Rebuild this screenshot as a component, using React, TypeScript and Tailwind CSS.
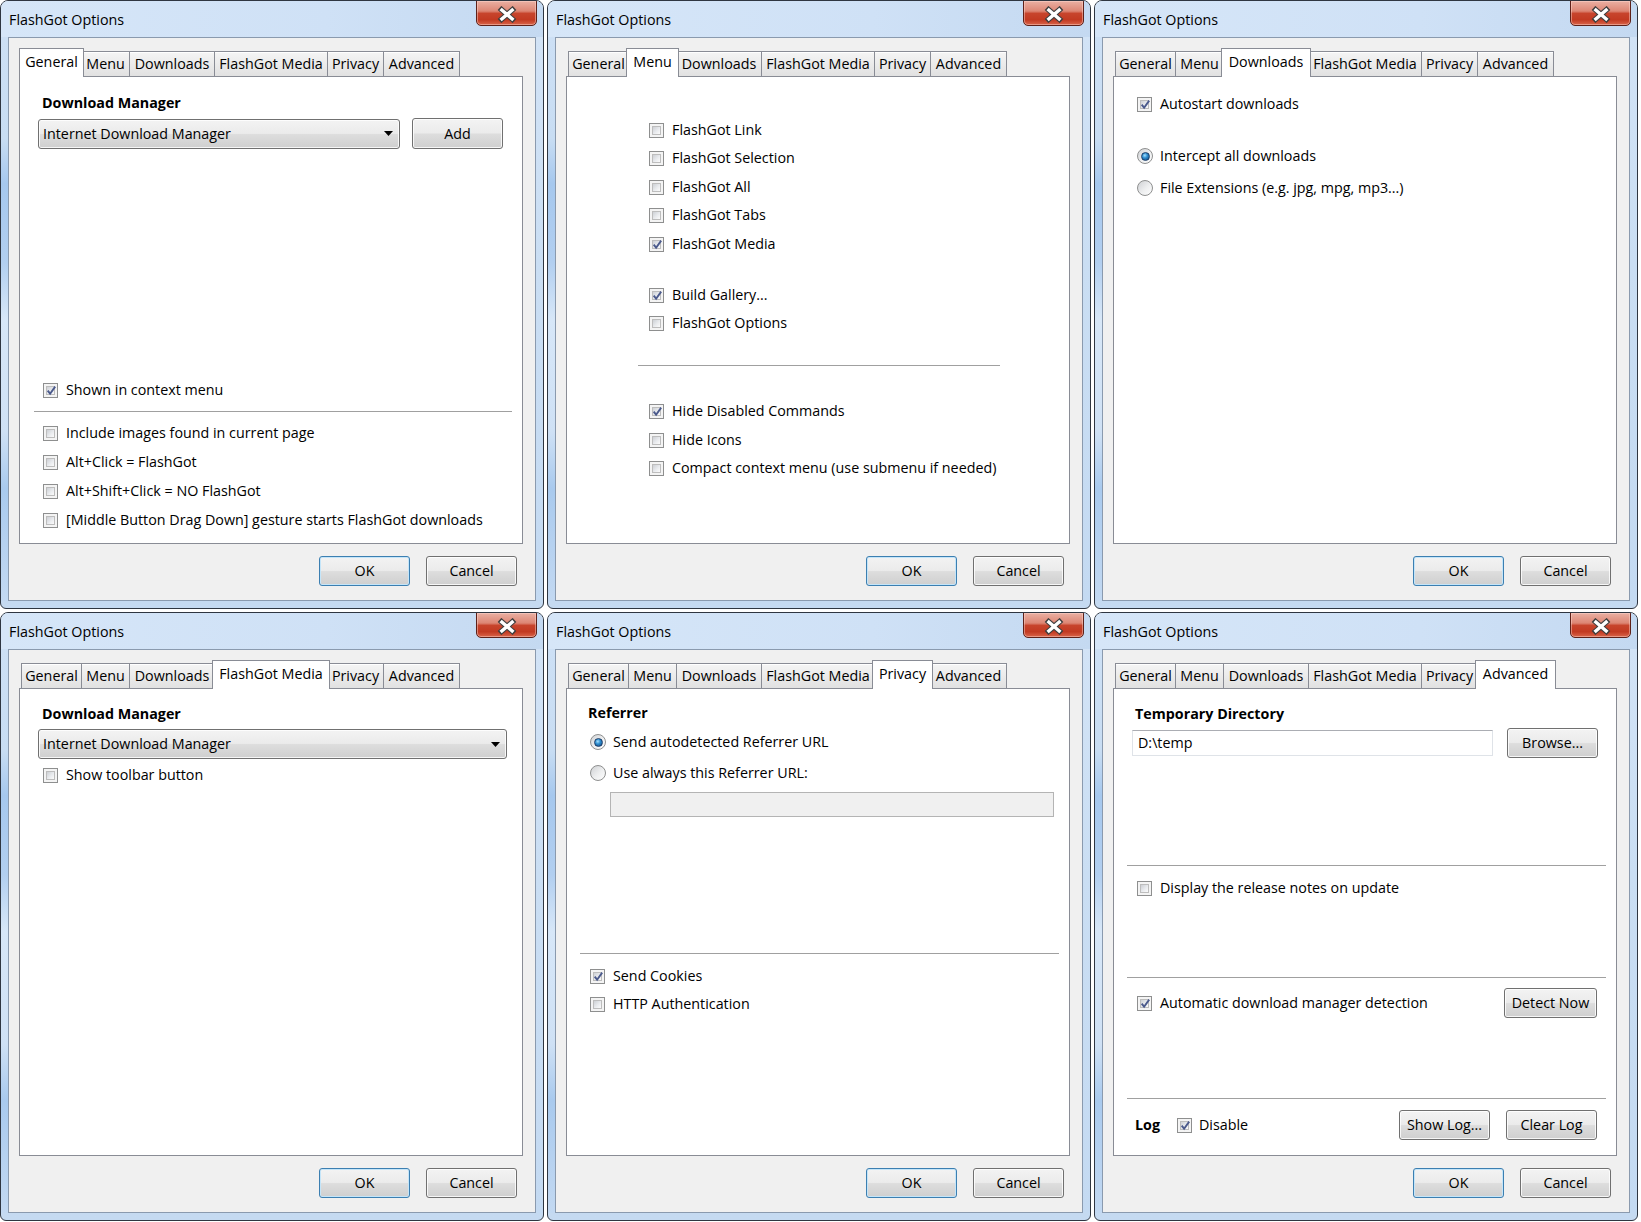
import React from "react";

const TABS: [string, string, string][] = [
  ["General", "w-[61px]", "w-[65px]"],
  ["Menu", "w-[49px]", "w-[53px]"],
  ["Downloads", "w-[86px]", "w-[90px]"],
  ["FlashGot Media", "w-[114px]", "w-[118px]"],
  ["Privacy", "w-[57px]", "w-[61px]"],
  ["Advanced", "w-[77px]", "w-[81px]"],
];

const btnBg =
  "bg-[linear-gradient(to_bottom,#f3f3f3_0%,#ebebeb_48%,#dddddd_52%,#cfcfcf_100%)]";

function Box({ on }: { on?: boolean }) {
  return (
    <div className="relative w-[15px] h-[15px] shrink-0 border border-[#8e8f8f] bg-[#f4f4f4] p-[2px]">
      <div className="w-full h-full border border-[#bdbdbd] bg-[linear-gradient(135deg,#cdd0d5_0%,#e9ebee_55%,#fbfbfb_100%)]" />
      {on && (
        <svg className="absolute left-[1px] top-[0px]" width="13" height="13" viewBox="0 0 13 13">
          <path d="M2.7 6.7 L5.1 9.7 L10.2 2.6" fill="none" stroke="#4b5a8c" strokeWidth="1.9" />
        </svg>
      )}
    </div>
  );
}

function Check({ on, label, className = "" }: { on?: boolean; label: string; className?: string }) {
  return (
    <div className={`flex items-center h-[20px] ${className}`}>
      <Box on={on} />
      <span className="ml-[8px] whitespace-nowrap">{label}</span>
    </div>
  );
}

function Radio({ on, label, className = "" }: { on?: boolean; label: string; className?: string }) {
  return (
    <div className={`flex items-center h-[20px] ${className}`}>
      <div className="w-[16px] h-[16px] shrink-0 rounded-full border border-[#8e8f8f] bg-[linear-gradient(135deg,#cfd1d4_0%,#eeeff0_55%,#fdfdfd_100%)] flex items-center justify-center">
        {on && (
          <div className="w-[9px] h-[9px] rounded-full border border-[#1d3f6b] bg-[radial-gradient(circle_at_40%_35%,#a6e0ff_0%,#2f8fd0_40%,#0f3f78_100%)]" />
        )}
      </div>
      <span className="ml-[7px] whitespace-nowrap">{label}</span>
    </div>
  );
}

function Btn({ label, className = "", def }: { label: string; className?: string; def?: boolean }) {
  return (
    <div
      className={`flex items-center justify-center shrink-0 rounded-[3px] border ${
        def
          ? "border-[#3c7fb1] shadow-[inset_0_0_0_1px_#c4e5f9]"
          : "border-[#707070] shadow-[inset_0_0_0_1px_rgba(255,255,255,0.8)]"
      } ${btnBg} ${className}`}
    >
      {label}
    </div>
  );
}

function Combo({ className = "" }: { className?: string }) {
  return (
    <div
      className={`flex items-center shrink-0 rounded-[3px] border border-[#707070] shadow-[inset_0_0_0_1px_rgba(255,255,255,0.8)] ${btnBg} pl-[4px] pr-[6px] ${className}`}
    >
      <span className="flex-1 whitespace-nowrap">Internet Download Manager</span>
      <svg width="9" height="5" viewBox="0 0 9 5">
        <path d="M0 0H9L4.5 5Z" fill="#000" />
      </svg>
    </div>
  );
}

function Sep({ className = "" }: { className?: string }) {
  return <div className={`h-[1px] shrink-0 bg-[#a0a0a0] ${className}`} />;
}

function Tabs({ active }: { active: number }) {
  return (
    <div className="flex items-end h-[28px] pl-[2px] shrink-0">
      {TABS.map(([name, w, wSel], i) => {
        const sel = i === active;
        const margin = sel ? (i === 0 ? "-ml-[2px] -mr-[2px]" : "-ml-[3px] -mr-[2px]") : i === 0 ? "" : "-ml-[1px]";
        return (
          <div
            key={name}
            className={`${margin} ${
              sel
                ? `${wSel} h-[29px] -mb-[1px] bg-white relative z-10 pb-[3px]`
                : `${w} h-[25px] bg-[linear-gradient(to_bottom,#f5f5f5_0%,#ebebeb_50%,#e1e1e1_100%)] shadow-[inset_0_1px_0_#fff]`
            } flex items-center justify-center border border-b-0 border-[#898c95] whitespace-nowrap`}
          >
            {name}
          </div>
        );
      })}
    </div>
  );
}

function Close() {
  return (
    <div className="absolute top-[-1px] right-[6px] w-[61px] h-[26px] rounded-b-[5px] border border-[#5e2119] bg-[linear-gradient(to_bottom,#eab0a3_0%,#dd8674_42%,#c7442c_52%,#c23a22_78%,#d9654a_100%)] shadow-[inset_0_0_0_1px_rgba(255,220,210,0.45)] flex items-center justify-center">
      <svg width="24" height="17" viewBox="0 0 24 17" className="mt-[2px]">
        <path d="M4.5 2 L19.5 15 M19.5 2 L4.5 15" stroke="#3f3f3f" strokeWidth="5.6" />
        <path d="M5.6 3 L18.4 14 M18.4 3 L5.6 14" stroke="#ffffff" strokeWidth="3.4" />
      </svg>
    </div>
  );
}

function Win({ active, children }: { active: number; children: React.ReactNode }) {
  return (
    <div className="relative w-[544px] h-[609px] shrink-0 flex flex-col rounded-t-[8px] rounded-b-[6px] border border-[#2f3641] bg-[linear-gradient(to_bottom,#dbe9f8_0%,#cde0f4_6%,#c5daf1_100%)] overflow-hidden">
      <div className="h-[36px] shrink-0 pl-[8px] pt-[9px] leading-[20px] bg-[linear-gradient(to_right,#d6e6f8_0%,#cfe1f6_60%,#c4d9f1_100%)]">
        FlashGot Options
      </div>
      <Close />
      <div className="flex h-[564px] shrink-0">
        <div className="w-[7px] shrink-0 bg-[linear-gradient(to_bottom,#cde0f5_0%,#c8ddf3_18%,#a6c8ee_26%,#b2cff0_40%,#d7e7f8_50%,#cfe1f5_70%,#a9caee_80%,#c3d9f2_100%)]" />
        <div className="w-[528px] h-[564px] shrink-0 border border-[#8a9aae] bg-[#f0f0f0] pt-[10px] pl-[10px] flex flex-col">
          <Tabs active={active} />
          <div className="w-[504px] h-[468px] shrink-0 border border-[#898c95] bg-white flex flex-col">
            {children}
          </div>
          <div className="w-[504px] mt-[12px] pr-[6px] flex justify-end gap-[16px]">
            <Btn label="OK" def className="w-[91px] h-[30px]" />
            <Btn label="Cancel" className="w-[91px] h-[30px]" />
          </div>
        </div>
        <div className="w-[7px] shrink-0 bg-[linear-gradient(to_bottom,#d2e3f6_0%,#cadef3_40%,#c4daf2_100%)]" />
      </div>
    </div>
  );
}

function GeneralPanel() {
  return (
    <>
      <div className="mt-[16px] ml-[22px] h-[20px] font-bold">Download Manager</div>
      <div className="mt-[5px] ml-[18px] flex items-center gap-[12px] h-[31px]">
        <Combo className="w-[362px] h-[30px]" />
        <Btn label="Add" className="w-[91px] h-[31px]" />
      </div>
      <Check on label="Shown in context menu" className="mt-[231px] ml-[23px]" />
      <Sep className="mt-[11px] ml-[14px] w-[478px]" />
      <Check label="Include images found in current page" className="mt-[11px] ml-[23px]" />
      <Check label="Alt+Click = FlashGot" className="mt-[9px] ml-[23px]" />
      <Check label="Alt+Shift+Click = NO FlashGot" className="mt-[9px] ml-[23px]" />
      <Check label="[Middle Button Drag Down] gesture starts FlashGot downloads" className="mt-[9px] ml-[23px]" />
    </>
  );
}

function MenuPanel() {
  return (
    <>
      <Check label="FlashGot Link" className="mt-[43px] ml-[82px]" />
      <Check label="FlashGot Selection" className="mt-[8px] ml-[82px]" />
      <Check label="FlashGot All" className="mt-[9px] ml-[82px]" />
      <Check label="FlashGot Tabs" className="mt-[8px] ml-[82px]" />
      <Check on label="FlashGot Media" className="mt-[9px] ml-[82px]" />
      <Check on label="Build Gallery..." className="mt-[31px] ml-[82px]" />
      <Check label="FlashGot Options" className="mt-[8px] ml-[82px]" />
      <Sep className="mt-[32px] ml-[71px] w-[362px]" />
      <Check on label="Hide Disabled Commands" className="mt-[35px] ml-[82px]" />
      <Check label="Hide Icons" className="mt-[9px] ml-[82px]" />
      <Check label="Compact context menu (use submenu if needed)" className="mt-[8px] ml-[82px]" />
    </>
  );
}

function DownloadsPanel() {
  return (
    <>
      <Check on label="Autostart downloads" className="mt-[17px] ml-[23px]" />
      <Radio on label="Intercept all downloads" className="mt-[32px] ml-[23px]" />
      <Radio label="File Extensions (e.g. jpg, mpg, mp3...)" className="mt-[12px] ml-[23px]" />
    </>
  );
}

function MediaPanel() {
  return (
    <>
      <div className="mt-[15px] ml-[22px] h-[20px] font-bold">Download Manager</div>
      <Combo className="mt-[5px] ml-[18px] w-[469px] h-[30px]" />
      <Check label="Show toolbar button" className="mt-[6px] ml-[23px]" />
    </>
  );
}

function PrivacyPanel() {
  return (
    <>
      <div className="mt-[14px] ml-[21px] h-[20px] font-bold">Referrer</div>
      <Radio on label="Send autodetected Referrer URL" className="mt-[9px] ml-[23px]" />
      <Radio label="Use always this Referrer URL:" className="mt-[11px] ml-[23px]" />
      <div className="mt-[9px] ml-[43px] w-[444px] h-[25px] shrink-0 border border-[#b4b4b4] bg-[#f0f0f0]" />
      <Sep className="mt-[136px] ml-[13px] w-[479px]" />
      <Check on label="Send Cookies" className="mt-[12px] ml-[23px]" />
      <Check label="HTTP Authentication" className="mt-[8px] ml-[23px]" />
    </>
  );
}

function AdvancedPanel() {
  return (
    <>
      <div className="mt-[15px] ml-[21px] h-[20px] font-bold">Temporary Directory</div>
      <div className="mt-[4px] ml-[18px] h-[30px] flex items-center gap-[14px]">
        <div className="w-[361px] h-[26px] shrink-0 border border-[#dfe3e8] border-t-[#abadb3] bg-white pl-[5px] flex items-center">
          D:\temp
        </div>
        <Btn label="Browse..." className="w-[91px] h-[30px]" />
      </div>
      <Sep className="mt-[107px] ml-[13px] w-[479px]" />
      <Check label="Display the release notes on update" className="mt-[12px] ml-[23px]" />
      <Sep className="mt-[79px] ml-[13px] w-[479px]" />
      <div className="mt-[10px] h-[30px] flex items-center">
        <Check on label="Automatic download manager detection" className="ml-[23px]" />
        <Btn label="Detect Now" className="ml-auto mr-[19px] w-[93px] h-[30px]" />
      </div>
      <Sep className="mt-[80px] ml-[13px] w-[479px]" />
      <div className="mt-[11px] h-[30px] flex items-center">
        <span className="ml-[21px] w-[42px] font-bold">Log</span>
        <Box on />
        <span className="ml-[7px]">Disable</span>
        <Btn label="Show Log..." className="ml-auto w-[91px] h-[30px]" />
        <Btn label="Clear Log" className="ml-[16px] mr-[19px] w-[91px] h-[30px]" />
      </div>
    </>
  );
}

export default function App() {
  return (
    <div className="w-[1641px] h-[1222px] bg-white font-['Open_Sans','Noto_Sans',sans-serif] text-[14.3px] leading-[20px] text-black flex flex-col gap-[3px]">
      <div className="flex gap-[3px]">
        <Win active={0}>
          <GeneralPanel />
        </Win>
        <Win active={1}>
          <MenuPanel />
        </Win>
        <Win active={2}>
          <DownloadsPanel />
        </Win>
      </div>
      <div className="flex gap-[3px]">
        <Win active={3}>
          <MediaPanel />
        </Win>
        <Win active={4}>
          <PrivacyPanel />
        </Win>
        <Win active={5}>
          <AdvancedPanel />
        </Win>
      </div>
    </div>
  );
}
